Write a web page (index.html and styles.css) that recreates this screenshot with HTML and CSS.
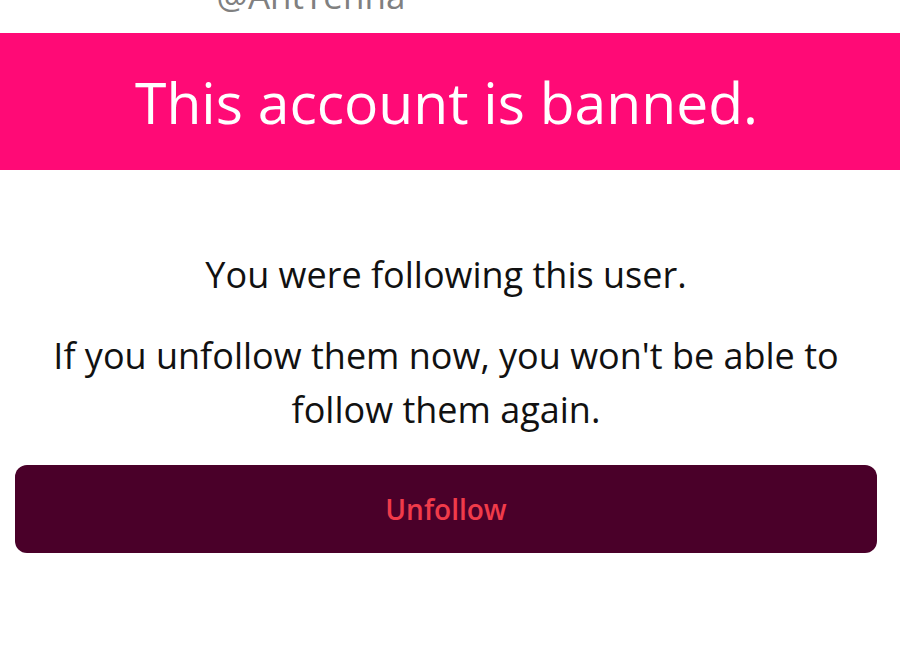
FILE: index.html
```html
<!DOCTYPE html>
<html>
<head>
<meta charset="utf-8">
<link rel="stylesheet" href="styles.css">
</head>
<body>
<div class="handle-bar"><div class="handle">@AntTenna</div></div>
<div class="banner">This account is banned.</div>
<div class="content">
  <p class="msg first">You were following this user.</p>
  <p class="msg">If you unfollow them now, you won't be able to follow them again.</p>
  <button class="unfollow">Unfollow</button>
</div>
</body>
</html>
```
FILE: styles.css
```css
html, body {
  margin: 0;
  padding: 0;
  background: #ffffff;
  font-family: "Open Sans", "Lato", sans-serif;
}
.handle-bar {
  height: 33px;
  overflow: hidden;
  display: flex;
  justify-content: center;
}
.handle {
  margin-top: -26px;
  margin-right: 278px;
  font-size: 35px;
  line-height: 44px;
  color: #808080;
}
.banner {
  background: #ff0a76;
  color: #ffffff;
  height: 137px;
  padding-right: 7px;
  display: flex;
  align-items: center;
  justify-content: center;
  font-size: 57px;
}
.content {
  padding: 78px 23px 0 15px;
  display: flex;
  flex-direction: column;
  align-items: center;
}
.msg {
  margin: 0;
  font-size: 36px;
  line-height: 54px;
  color: #111111;
  text-align: center;
  max-width: 810px;
}
.msg.first {
  margin-bottom: 27px;
}
.unfollow {
  margin-top: 28px;
  width: 100%;
  height: 88px;
  border: none;
  border-radius: 12px;
  background: #4a0029;
  color: #f03b4a;
  font-family: inherit;
  font-size: 28px;
  font-weight: 600;
}
```
